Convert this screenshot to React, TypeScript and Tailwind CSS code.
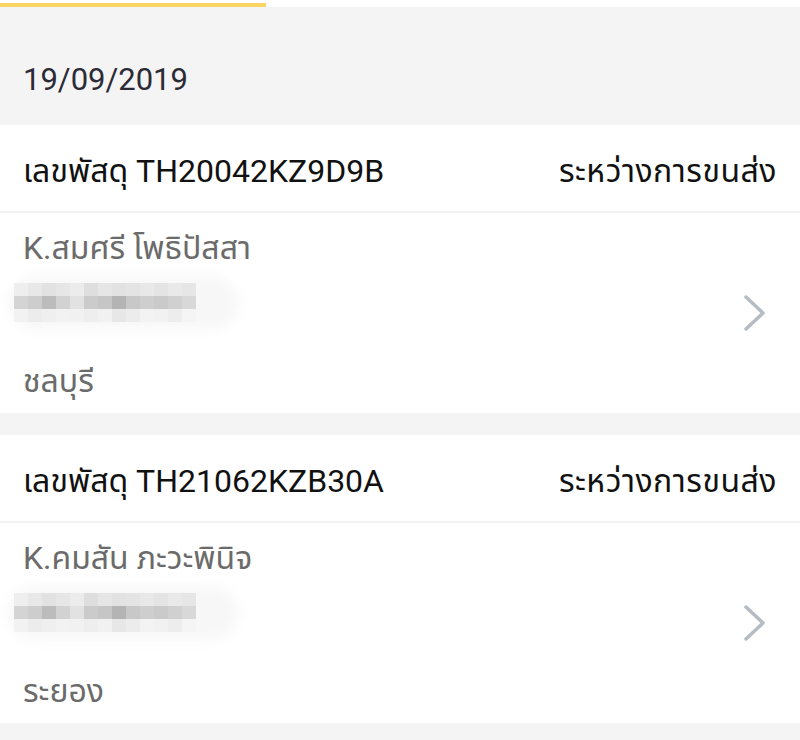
import React from "react";

type Parcel = {
  code: string;
  status: string;
  name: string;
  province: string;
};

const parcels: Parcel[] = [
  { code: "TH20042KZ9D9B", status: "ระหว่างการขนส่ง", name: "K.สมศรี โพธิปัสสา", province: "ชลบุรี" },
  { code: "TH21062KZB30A", status: "ระหว่างการขนส่ง", name: "K.คมสัน ภะวะพินิจ", province: "ระยอง" },
];

// pixelated (censored) address strip
const mosaic: string[][] = [
  ["bg-[#eeeeee]", "bg-[#e8e8e8]", "bg-[#e2e2e2]", "bg-[#e6e6e6]", "bg-[#ececec]", "bg-[#dedede]", "bg-[#e6e6e6]", "bg-[#e2e2e2]", "bg-[#e4e4e4]", "bg-[#e8e8e8]", "bg-[#e4e4e4]", "bg-[#e9e9e9]", "bg-[#e6e6e6]"],
  ["bg-[#d4d4d4]", "bg-[#cdcdcd]", "bg-[#bcbcbc]", "bg-[#d2d2d2]", "bg-[#e2e2e2]", "bg-[#cbcbcb]", "bg-[#c6c6c6]", "bg-[#b4b4b4]", "bg-[#c8c8c8]", "bg-[#cecece]", "bg-[#cacaca]", "bg-[#d0d0d0]", "bg-[#d8d8d8]"],
  ["bg-[#f2f2f2]", "bg-[#ececec]", "bg-[#efefef]", "bg-[#f2f2f2]", "bg-[#f1f1f1]", "bg-[#eeeeee]", "bg-[#f1f1f1]", "bg-[#e7e7e7]", "bg-[#ececec]", "bg-[#f3f3f3]", "bg-[#f1f1f1]", "bg-[#ededed]", "bg-[#f5f5f5]"],
];

function Blurred() {
  return (
    <div className="relative ml-[14px] w-[182px]">
      <div className="absolute -left-[6px] -top-[6px] h-[52px] w-[230px] rounded-full bg-[#f7f7f7] blur-[6px]" />
      <div className="relative flex flex-col">
        {mosaic.map((row, i) => (
          <div key={i} className="flex">
            {row.map((c, j) => (
              <div key={j} className={`h-[13px] w-[14px] ${c}`} />
            ))}
          </div>
        ))}
      </div>
    </div>
  );
}

function Chevron() {
  return (
    <svg width="26" height="38" viewBox="0 0 26 38" fill="none">
      <path d="M4 3 L21 19 L4 35" stroke="#b5bcc3" strokeWidth="3.5" strokeLinecap="round" strokeLinejoin="round" />
    </svg>
  );
}

function ParcelCard({ p }: { p: Parcel }) {
  return (
    <div className="bg-white">
      <div className="flex h-[88px] items-center justify-between border-b-2 border-[#f2f2f2] px-[23px] pt-[6px] text-[32px] text-[#111111]">
        <span>เลขพัสดุ {p.code}</span>
        <span className="tracking-[0.5px]">{p.status}</span>
      </div>
      <div className="flex h-[200px] items-center justify-between pr-[32px]">
        <div className="flex h-full flex-col">
          <div className="flex h-[70px] items-center px-[23px] text-[32px] text-[#6b6b6b]">{p.name}</div>
          <Blurred />
          <div className="flex flex-1 items-center px-[23px] pt-[26px] text-[32px] text-[#6b6b6b]">{p.province}</div>
        </div>
        <Chevron />
      </div>
    </div>
  );
}

export default function App() {
  return (
    <div className="h-[740px] overflow-hidden bg-[#f4f4f4]" style={{ fontFamily: "Roboto, 'Noto Sans Thai', 'Noto Sans', sans-serif" }}>
      <div className="h-[7px] bg-white pt-[3px]">
        <div className="h-[4px] w-[266px] bg-[#fcd462]" />
      </div>
      <div className="flex h-[118px] items-center px-[23px] pt-[28px] text-[31px] text-[#2b2b36]">19/09/2019</div>
      <ParcelCard p={parcels[0]} />
      <div className="h-[22px]" />
      <ParcelCard p={parcels[1]} />
    </div>
  );
}
